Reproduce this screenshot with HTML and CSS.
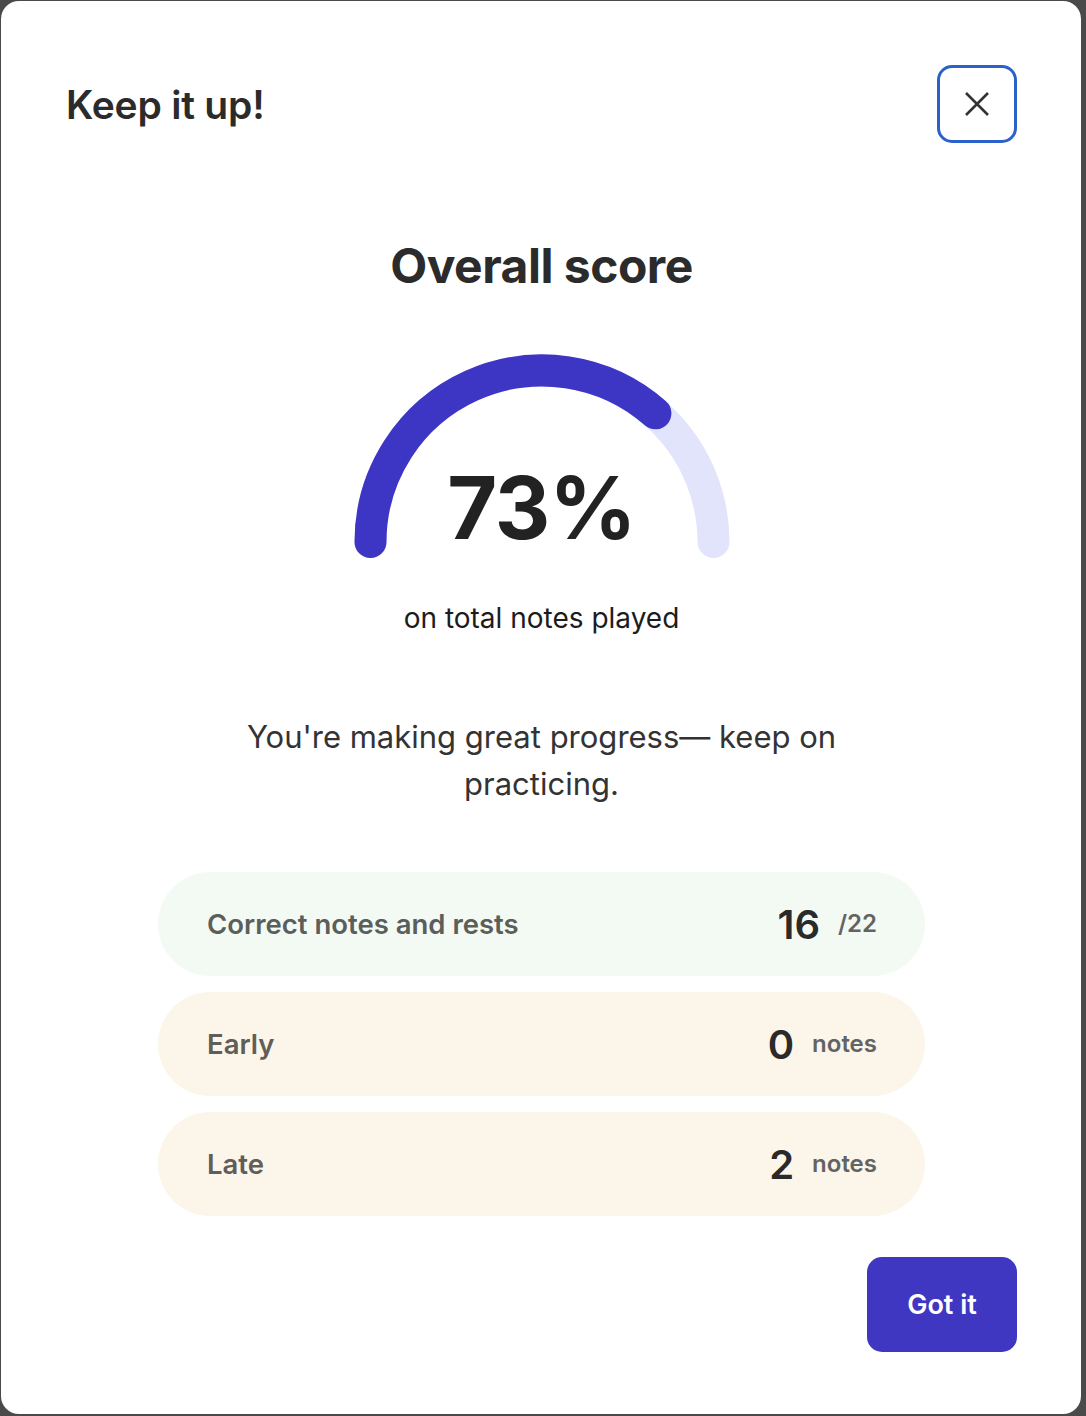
FILE: index.html
```html
<!DOCTYPE html>
<html lang="en">
<head>
<meta charset="utf-8">
<title>Keep it up!</title>
<link rel="stylesheet" href="styles.css">
</head>
<body>
<div class="modal">
  <header class="modal-header">
    <h1 class="modal-title">Keep it up!</h1>
    <button class="close-btn" aria-label="Close">
      <svg width="26" height="26" viewBox="0 0 26 26"><path d="M2 2 L24 24 M24 2 L2 24" stroke="#333" stroke-width="2.6" stroke-linecap="butt" fill="none"/></svg>
    </button>
  </header>

  <h2 class="score-title">Overall score</h2>

  <div class="gauge">
    <svg class="gauge-svg" width="376" height="206" viewBox="0 0 376 206">
      <path d="M16.5 188 A171.5 171.5 0 0 1 359.5 188" stroke="#e1e4fb" stroke-width="32" stroke-linecap="round" fill="none"/>
      <path d="M16.5 188 A171.5 171.5 0 0 1 301.4 59.3" stroke="#3d35c4" stroke-width="32" stroke-linecap="round" fill="none"/>
    </svg>
    <div class="gauge-value">73%</div>
  </div>

  <p class="gauge-caption">on total notes played</p>

  <p class="message">You're making great progress— keep on practicing.</p>

  <div class="stats">
    <div class="stat stat-good">
      <span class="stat-label">Correct notes and rests</span>
      <span class="stat-value"><span class="stat-num">16</span><span class="stat-unit">/22</span></span>
    </div>
    <div class="stat stat-warn">
      <span class="stat-label">Early</span>
      <span class="stat-value"><span class="stat-num">0</span><span class="stat-unit">notes</span></span>
    </div>
    <div class="stat stat-warn">
      <span class="stat-label">Late</span>
      <span class="stat-value"><span class="stat-num">2</span><span class="stat-unit">notes</span></span>
    </div>
  </div>

  <div class="actions">
    <button class="primary-btn">Got it</button>
  </div>
</div>
</body>
</html>
```

FILE: styles.css
```css
* { box-sizing: border-box; }

html, body {
  margin: 0;
  padding: 0;
}

body {
  background: #4a4a4a;
  font-family: Inter, "Noto Sans", "Liberation Sans", sans-serif;
  width: 1086px;
  height: 1416px;
  overflow: hidden;
}

.modal {
  margin: 1px 5px 0 1px;
  width: 1080px;
  height: 1413px;
  background: #ffffff;
  border-radius: 18px;
  padding: 65px 64px 62px 65px;
  display: flex;
  flex-direction: column;
  align-items: center;
}

.modal-header {
  width: 100%;
  display: flex;
  align-items: center;
  justify-content: space-between;
  height: 78px;
}

.modal-title {
  margin: 0;
  font-size: 39px;
  font-weight: 600;
  color: #2b2b2b;
  letter-spacing: -0.2px;
  position: relative;
  top: -1px;
}

.close-btn {
  width: 80px;
  height: 78px;
  border: 3px solid #2a62c9;
  border-radius: 15px;
  background: #fff;
  display: flex;
  align-items: center;
  justify-content: center;
  padding: 0;
  margin-top: -2px;
}

.score-title {
  margin: 94px 0 0;
  font-size: 48px;
  line-height: 56px;
  font-weight: 700;
  color: #2b2b2b;
  letter-spacing: -0.5px;
}

.gauge {
  position: relative;
  margin-top: 60px;
  width: 376px;
  height: 206px;
}

.gauge-svg {
  display: block;
}

.gauge-value {
  position: absolute;
  left: 0;
  right: 0;
  top: 104px;
  text-align: center;
  font-size: 86px;
  line-height: 100px;
  font-weight: 700;
  color: #222;
  letter-spacing: -1px;
}

.gauge-caption {
  margin: 41px 0 0;
  font-size: 28px;
  line-height: 34px;
  color: #1c1c1c;
}

.message {
  margin: 78px 0 0;
  width: 660px;
  text-align: center;
  font-size: 31px;
  line-height: 47px;
  color: #333;
}

.stats {
  margin-top: 65px;
  width: 767px;
  display: flex;
  flex-direction: column;
  gap: 16px;
}

.stat {
  height: 104px;
  border-radius: 52px;
  padding: 0 48px 0 49px;
  display: flex;
  align-items: center;
  justify-content: space-between;
}

.stat-good { background: #f3faf3; }
.stat-warn { background: #fcf6ea; }

.stat-label {
  font-size: 27.5px;
  font-weight: 600;
  color: #5b5e5b;
}

.stat-warn .stat-label { color: #615d57; }

.stat-value {
  display: flex;
  align-items: center;
  gap: 18px;
}

.stat-num {
  font-size: 40px;
  font-weight: 600;
  color: #2a2a2a;
}

.stat-unit {
  font-size: 24px;
  font-weight: 600;
  color: #636363;
  position: relative;
  top: -1px;
}

.actions {
  margin-top: auto;
  width: 100%;
  display: flex;
  justify-content: flex-end;
}

.primary-btn {
  width: 150px;
  height: 95px;
  border: none;
  border-radius: 15px;
  background: #3f37c1;
  color: #fff;
  font-family: Inter, "Noto Sans", "Liberation Sans", sans-serif;
  font-size: 27px;
  font-weight: 600;
}
```
